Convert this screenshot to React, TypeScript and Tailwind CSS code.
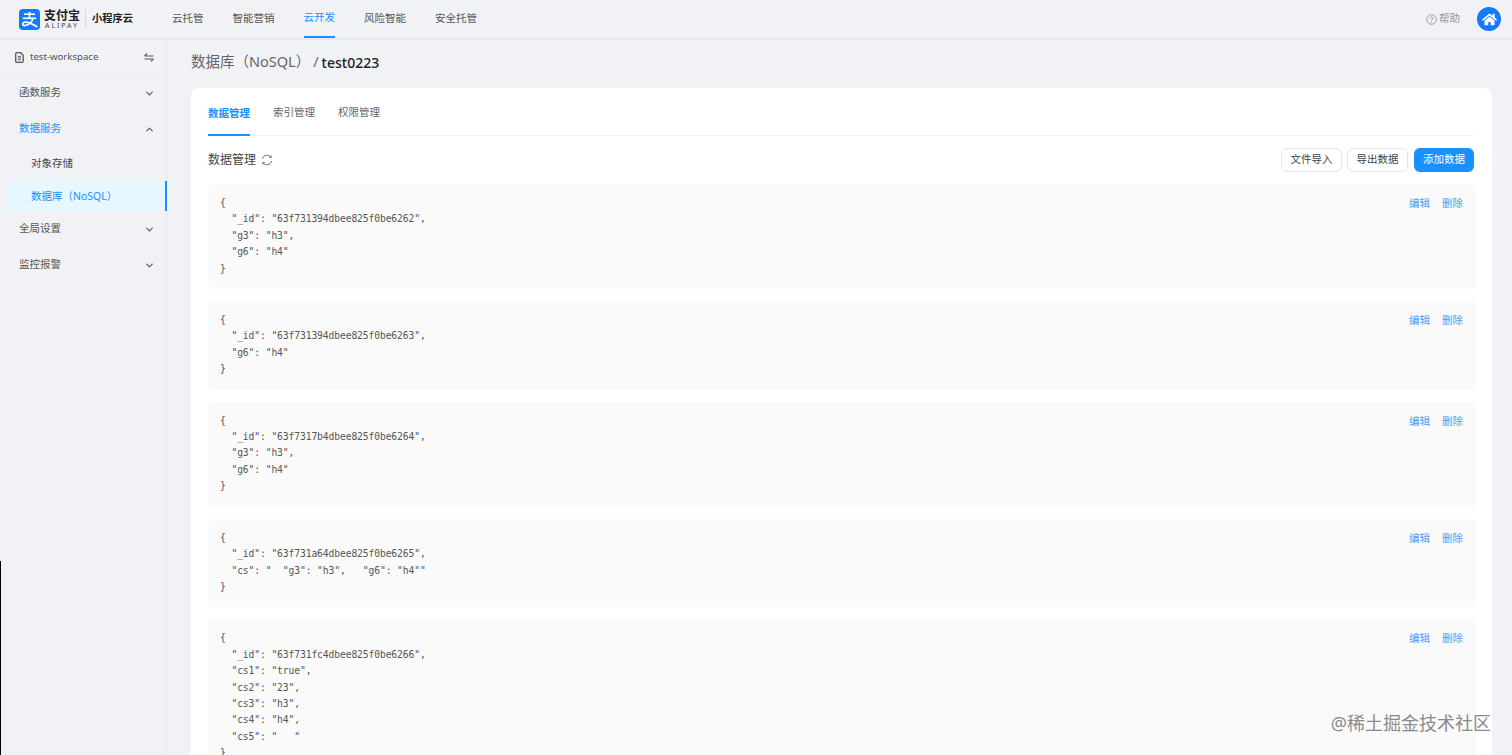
import { ChevronDown, ChevronUp } from "lucide-react";
import { FaHome } from "react-icons/fa";

const cjk = "font-['Noto_Sans','Noto_Sans_CJK_SC',sans-serif]";

const navItems = ["云托管", "智能营销", "云开发", "风险智能", "安全托管"];

const records = [
  `{\n  "_id": "63f731394dbee825f0be6262",\n  "g3": "h3",\n  "g6": "h4"\n}`,
  `{\n  "_id": "63f731394dbee825f0be6263",\n  "g6": "h4"\n}`,
  `{\n  "_id": "63f7317b4dbee825f0be6264",\n  "g3": "h3",\n  "g6": "h4"\n}`,
  `{\n  "_id": "63f731a64dbee825f0be6265",\n  "cs": "  "g3": "h3",   "g6": "h4""\n}`,
  `{\n  "_id": "63f731fc4dbee825f0be6266",\n  "cs1": "true",\n  "cs2": "23",\n  "cs3": "h3",\n  "cs4": "h4",\n  "cs5": "   "\n}`,
];

function AlipayMark() {
  return (
    <svg width="21" height="21" viewBox="0 0 21 21" className="ml-[19px] shrink-0">
      <rect width="21" height="21" rx="4" fill="#1677ff" />
      <g fill="none" stroke="#fff" strokeWidth="1.7">
        <path d="M5 5.2H16" />
        <path d="M10.5 2.8V9" />
        <path d="M3.8 9.3H17.2" />
        <path d="M14.2 9.3C12.6 13.6 9.4 16.6 5.6 16.6C3.2 16.6 3 13.6 5.6 13.2C9 12.7 13.6 15 18.4 18" />
      </g>
    </svg>
  );
}

function SwapIcon() {
  return (
    <svg width="10" height="9" viewBox="0 0 10 9" className="ml-auto text-[#555]" fill="none" stroke="currentColor" strokeWidth="1.1">
      <path d="M0.5 3H9.5M0.5 3L3.2 0.6" />
      <path d="M0.5 6H9.5M9.5 6L6.8 8.4" />
    </svg>
  );
}

function DocIcon() {
  return (
    <svg width="9" height="11" viewBox="0 0 9 11" className="text-[#555] shrink-0" fill="none" stroke="currentColor" strokeWidth="1.3">
      <path d="M1.7 0.7H5.6L8.2 3.2V9A1.3 1.3 0 0 1 6.9 10.3H1.7A1 1 0 0 1 0.7 9.3V1.7A1 1 0 0 1 1.7 0.7Z" />
      <path d="M2.8 4.4H6M2.8 6H6M2.8 7.8H6" strokeWidth="0.9" />
    </svg>
  );
}

function SyncIcon() {
  return (
    <svg width="12" height="12" viewBox="0 0 12 12" className="ml-[5px] text-[#666]" fill="none" stroke="currentColor" strokeWidth="0.9">
      <path d="M1.3 5A4.8 4.8 0 0 1 9.9 3.2" />
      <path d="M10.7 7A4.8 4.8 0 0 1 2.1 8.8" />
      <path d="M10.2 1.4V3.5H8.2" />
      <path d="M1.8 10.6V8.5H3.8" />
    </svg>
  );
}

function HelpIcon() {
  return (
    <svg width="11" height="11" viewBox="0 0 11 11" fill="none" stroke="currentColor" strokeWidth="0.9">
      <circle cx="5.5" cy="5.5" r="4.8" />
      <path d="M4 4.3C4 2.4 7 2.5 7 4.3C7 5.4 5.5 5.4 5.5 6.7" />
      <circle cx="5.5" cy="8.1" r="0.3" />
    </svg>
  );
}

function Header() {
  return (
    <header className="h-[38px] shrink-0 flex items-center bg-[#f0f2f5] shadow-[0_1px_3px_rgba(0,0,0,0.08)] relative z-10">
      <AlipayMark />
      <div className="ml-[4px] w-[36px] flex flex-col items-center">
        <span className="text-[12px] leading-[13px] font-bold text-[#222]">支付宝</span>
        <span className="text-[7px] leading-[8px] tracking-[1.9px] text-[#444]">ALIPAY</span>
      </div>
      <div className="ml-[5px] w-px h-[18px] bg-[#d5d8dc]" />
      <span className="ml-[6px] w-[42px] text-[10.25px] font-bold text-[#222]">小程序云</span>
      <nav className="ml-[38px] flex h-full gap-[29px]">
        {navItems.map((item) => (
          <div
            key={item}
            className={
              item === "云开发"
                ? "h-full flex items-center text-[10.5px] text-[#1890ff] border-b-2 border-[#1890ff]"
                : "h-full flex items-center text-[10.5px] text-[#555]"
            }
          >
            {item}
          </div>
        ))}
      </nav>
      <div className="ml-auto flex items-center gap-[2px] text-[10.5px] text-[#999]">
        <HelpIcon />
        帮助
      </div>
      <div className="ml-[17px] mr-[11px] w-[24px] h-[24px] rounded-full bg-[#1677ff] flex items-center justify-center text-white">
        <FaHome size={15} />
      </div>
    </header>
  );
}

function SideGroup({ label, open, active }: { label: string; open?: boolean; active?: boolean }) {
  return (
    <div className="h-[36px] pl-[19px] pr-[11px] flex items-center justify-between">
      <span className={active ? "text-[10.5px] text-[#1890ff]" : "text-[10.5px] text-[#555]"}>{label}</span>
      {open ? (
        <ChevronUp size={11} strokeWidth={2.5} className="text-[#555]" />
      ) : (
        <ChevronDown size={11} strokeWidth={2.5} className="text-[#555]" />
      )}
    </div>
  );
}

function Sidebar() {
  return (
    <aside className="w-[167px] shrink-0 border-r border-[#e4e6ea] bg-[#f0f2f5] flex flex-col">
      <div className="h-[37px] pt-[2px] pl-[15px] pr-[12px] flex items-center border-b border-[#eaecef] text-[#555]">
        <DocIcon />
        <span className="ml-[6px] text-[9.6px]">test-workspace</span>
        <SwapIcon />
      </div>
      <SideGroup label="函数服务" />
      <SideGroup label="数据服务" open active />
      <div className="h-[34px] pl-[31px] flex items-center text-[10.5px] text-[#444]">对象存储</div>
      <div className="h-[30px] pt-[1px] ml-[8px] pl-[23px] flex items-center text-[10.5px] text-[#1890ff] bg-[#e6f7ff] border-r-2 border-[#1890ff] mr-[-1px]">
        数据库（NoSQL）
      </div>
      <SideGroup label="全局设置" />
      <SideGroup label="监控报警" />
    </aside>
  );
}

function Record({ code }: { code: string }) {
  return (
    <div className="flex justify-between bg-[#fafafa] rounded-[4px] pl-[12px] pr-[13px] pt-[11px] pb-[12px]">
      <pre className="font-['DejaVu_Sans_Mono',monospace] text-[9.7px] tracking-[-0.12px] leading-[16.4px] text-[#555]">{code}</pre>
      <div className="flex gap-[12px] text-[10.5px] leading-[16px] text-[#4f9df5] h-[16px]">
        <span>编辑</span>
        <span>删除</span>
      </div>
    </div>
  );
}

function Main() {
  return (
    <main className="flex-1 min-w-0 pl-[24px] pr-[20px] bg-[#f0f2f5]">
      <div className="h-[50px] pb-[2px] flex items-center">
        <span className="text-[14.5px] text-[#666]">数据库（NoSQL）</span>
        <span className="ml-[3px] text-[14.5px] text-[#666]">/</span>
        <span className="ml-[3px] text-[14px] font-medium text-[#222]">test0223</span>
      </div>
      <section className="bg-white rounded-[8px] pl-[17px] pr-[18px]">
        <div className="h-[48px] flex items-end gap-[23px] border-b border-[#f2f2f2]">
          <div className="h-[30px] -mb-px border-b-2 border-[#1890ff] text-[10.5px] font-bold text-[#1890ff] w-[42px]">数据管理</div>
          <div className="h-[30px] text-[10.5px] text-[#666]">索引管理</div>
          <div className="h-[30px] text-[10.5px] text-[#666]">权限管理</div>
        </div>
        <div className="h-[48px] flex items-center">
          <span className="text-[12px] text-[#444]">数据管理</span>
          <SyncIcon />
          <div className="ml-auto flex">
            <button className="w-[61px] h-[24px] rounded-[6px] border border-[#e4e4e4] bg-white text-[10.5px] text-[#444]">文件导入</button>
            <button className="ml-[5px] w-[61px] h-[24px] rounded-[6px] border border-[#e4e4e4] bg-white text-[10.5px] text-[#444]">导出数据</button>
            <button className="ml-[6px] w-[60px] h-[24px] rounded-[6px] bg-[#1890ff] text-[10.5px] text-white">添加数据</button>
          </div>
        </div>
        <div className="flex flex-col gap-[12px] -mr-[2px]">
          {records.map((code) => (
            <Record key={code} code={code} />
          ))}
        </div>
      </section>
    </main>
  );
}

export default function App() {
  return (
    <div className={`relative h-[755px] w-[1512px] overflow-hidden flex flex-col bg-[#f0f2f5] ${cjk}`}>
      <Header />
      <div className="flex flex-1 min-h-0">
        <Sidebar />
        <Main />
      </div>
      {/* stray edge from the captured window */}
      <div className="absolute left-0 top-[561px] bottom-0 w-px bg-black" />
      <div className="absolute right-[21px] bottom-[20px] text-[18px] leading-[24px] text-[#8a8a8a]">@稀土掘金技术社区</div>
    </div>
  );
}
